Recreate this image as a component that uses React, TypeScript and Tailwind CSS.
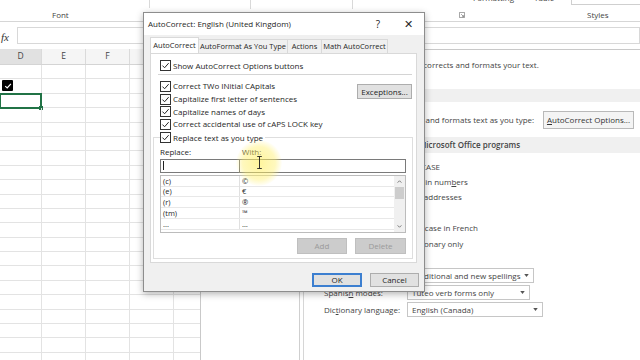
import React from 'react';

function Tick({ dark = false }: { dark?: boolean }) {
  return (
    <span className="flex h-[11px] w-[11px] shrink-0 items-center justify-center border border-[#333] bg-white">
      <svg viewBox="0 0 10 10" className="h-[9px] w-[9px]">
        <path d="M1.6 5.1 L4 7.5 L8.5 2.4" fill="none" stroke={dark ? '#000' : '#222'} strokeWidth="1.1" />
      </svg>
    </span>
  );
}

function CheckRow({ label }: { label: string }) {
  return (
    <div className="flex h-[12.7px] items-center gap-[2px]">
      <Tick />
      <span>{label}</span>
    </div>
  );
}

function Arrow() {
  return (
    <svg viewBox="0 0 6 4" className="h-[3px] w-[5px]">
      <path d="M0 0 H6 L3 4 Z" fill="#555" />
    </svg>
  );
}

const cols = [
  { name: 'D', w: 'w-[42px]' },
  { name: 'E', w: 'w-[44px]' },
  { name: 'F', w: 'w-[44px]' },
  { name: 'G', w: 'w-[44px]' },
  { name: 'H', w: 'w-[44px]' },
];

const entries = [
  ['(c)', '©'],
  ['(e)', '€'],
  ['(r)', '®'],
  ['(tm)', '™'],
  ['...', '…'],
];

const spelling = [
  'Ignore words in UPPERCASE',
  'Ignore words that contain numbers',
  'Ignore Internet and file addresses',
  'Flag repeated words',
  'Enforce accented uppercase in French',
  'Suggest from main dictionary only',
];

export default function App() {
  const rows = Array.from({ length: 21 }, (_, i) => i);

  return (
    <div className="relative flex h-[360px] w-[640px] flex-col overflow-hidden bg-white font-['Open_Sans','Liberation_Sans',sans-serif] text-[#262626]">
      {/* ribbon strip */}
      <div className="flex h-[22px] shrink-0 border-b border-[#d6d6d6] text-[8px] text-[#444]">
        <div className="flex w-[150px] flex-col">
          <div className="h-[9px] border-r border-[#d9d9d9]" />
          <div className="pl-[52px] pt-[1px]">Font</div>
        </div>
        <div className="flex w-[101px] flex-col">
          <div className="h-[9px] border-r border-[#d9d9d9]" />
        </div>
        <div className="flex w-[102px] flex-col">
          <div className="h-[9px] border-r border-[#d9d9d9]" />
        </div>
        <div className="flex flex-1 flex-col">
          <div className="flex h-[9px] items-start overflow-hidden">
            <span className="ml-[120px] -mt-[7px] leading-[10px]">Formatting</span>
            <span className="ml-[20px] -mt-[7px] leading-[10px]">Table</span>
            <div className="ml-[17px] h-[5px] flex-1 border-b border-l border-[#cfcfcf]" />
          </div>
          <div className="flex items-center pt-[3px]">
            <svg viewBox="0 0 7 7" className="ml-[106px] h-[6px] w-[6px]">
              <path d="M0.5 0.5 H6.5 V6.5 H0.5 Z" fill="none" stroke="#777" strokeWidth="0.8" />
              <path d="M2.5 2.5 L5.5 5.5 M3.5 5.5 H5.5 V3.5" fill="none" stroke="#777" strokeWidth="0.8" />
            </svg>
            <span className="ml-[122px]">Styles</span>
          </div>
        </div>
      </div>

      {/* formula bar */}
      <div className="flex h-[27px] shrink-0 items-start pt-[5px]">
        <span className="w-[17px] pl-[1px] pt-[2px] font-['Liberation_Serif',serif] text-[11px] italic text-[#333]">fx</span>
        <div className="h-[17px] flex-1 border border-[#d8d8d8]" />
      </div>

      {/* sheet + options window */}
      <div className="flex flex-1">
        <div className="w-[200px] shrink-0 overflow-hidden">
          <div className="flex h-[16px] w-[218px] border-b border-[#d4d4d4] text-[8.5px] text-[#444]">
            {cols.map((c, i) => (
              <div
                key={c.name}
                className={`${c.w} flex items-center justify-center border-r border-[#dadada] ${i === 0 ? 'bg-[#e1e1e1]' : 'bg-[#f5f5f5]'}`}
              >
                {c.name}
              </div>
            ))}
          </div>
          {rows.map((r) => (
            <div key={r} className="flex h-[14.4px] w-[218px] border-b border-[#e3e3e3]">
              {cols.map((c, i) => (
                <div key={c.name} className={`${c.w} relative border-r border-[#e3e3e3]`}>
                  {i === 0 && r === 1 && (
                    <span className="ml-[2px] mt-[1px] flex h-[11px] w-[11px] items-center justify-center rounded-[1px] bg-black">
                      <svg viewBox="0 0 10 10" className="h-[8px] w-[8px]">
                        <path d="M1.5 5.2 L4 7.4 L8.6 2.4" fill="none" stroke="#fff" strokeWidth="1.5" />
                      </svg>
                    </span>
                  )}
                  {i === 0 && r === 2 && (
                    <div className="absolute -left-[1px] -top-[1px] h-[16px] w-[43px] border-2 border-[#217346]">
                      <span className="absolute -bottom-[3px] -right-[3px] h-[4px] w-[4px] bg-[#217346]" />
                    </div>
                  )}
                </div>
              ))}
            </div>
          ))}
        </div>

        {/* options window behind */}
        <div className="flex flex-1 border-l border-t border-[#c9c9c9] text-[8px] text-[#444]">
          <div className="ml-[2px] w-[97px] border-r border-[#cfcfcf]" />
          <div className="ml-[3px] flex flex-1 flex-col border-l border-[#d6d6d6]">
            <div className="mt-[9px] flex h-[12px] items-center pl-[50px]">
              Change how Excel corrects and formats your text.
            </div>
            <div className="mt-[18px] flex h-[13px] items-center bg-[#f0f0f0] pl-[6px] font-semibold">
              AutoCorrect options
            </div>
            <div className="mt-[9px] flex h-[18px] items-center pl-[20px]">
              <span>Change how Excel corrects and formats text as you type:</span>
              <span className="ml-auto mr-[6px] flex h-[18px] w-[91px] items-center justify-center border border-[#b9b9b9] bg-[#f4f4f4] text-[#333]">
                <span className="underline">A</span>utoCorrect Options...
              </span>
            </div>
            <div className="mt-[8px] flex h-[16px] items-center bg-[#f0f0f0] pl-[8px] font-semibold">
              When correcting spelling in Microsoft Office programs
            </div>
            <div className="mt-[6px] flex flex-col">
              {spelling.map((s) => (
                <div key={s} className="flex h-[15.4px] items-center gap-[4px] pl-[18px]">
                  <span className="h-[10px] w-[10px] border border-[#666]" />
                  <span>
                    {s === 'Ignore words that contain numbers' ? (
                      <>
                        Ignore words that contain num<span className="underline">b</span>ers
                      </>
                    ) : (
                      s
                    )}
                  </span>
                </div>
              ))}
            </div>
            <div className="mt-[17px] flex h-[15px] items-center pl-[20px]">
              <span className="w-[83px]">French modes:</span>
              <div className="flex h-[15px] w-[127px] items-center justify-between border border-[#c6c6c6] px-[4px]">
                <span>Traditional and new spellings</span>
                <Arrow />
              </div>
            </div>
            <div className="mt-[2px] flex h-[15px] items-center pl-[20px]">
              <span className="w-[83px]">
                Spanis<span className="underline">h</span> modes:
              </span>
              <div className="flex h-[15px] w-[123px] items-center justify-between border border-[#c6c6c6] px-[4px]">
                <span>Tuteo verb forms only</span>
                <Arrow />
              </div>
            </div>
            <div className="mt-[2px] flex h-[15px] items-center pl-[20px]">
              <span className="w-[83px]">
                Dic<span className="underline">t</span>ionary language:
              </span>
              <div className="flex h-[15px] w-[136px] items-center justify-between border border-[#c6c6c6] px-[4px]">
                <span>English (Canada)</span>
                <Arrow />
              </div>
            </div>
          </div>
        </div>
      </div>

      {/* AutoCorrect dialog */}
      <div className="absolute left-[143px] top-[12px] flex h-[280px] w-[282px] flex-col border border-[#8d8d8d] bg-[#f0f0f0] text-[8px] text-[#262626] shadow-[0_2px_7px_rgba(0,0,0,0.3)]">
        <div className="flex h-[22px] items-center bg-white text-[8px]">
          <span className="flex-1 pl-[4px]">AutoCorrect: English (United Kingdom)</span>
          <span className="w-[30px] text-center text-[10px]">?</span>
          <span className="w-[30px] text-center text-[11px] font-light">✕</span>
          <span className="w-[1px]" />
        </div>

        <div className="ml-[6px] mt-[2px] flex h-[16px] items-end whitespace-nowrap text-[7.5px]">
          <div className="flex h-[16px] w-[49px] items-center justify-center border border-b-0 border-[#d9d9d9] bg-white">
            AutoCorrect
          </div>
          <div className="flex h-[14px] w-[89px] items-center justify-center border-t border-r border-[#d9d9d9]">AutoFormat As You Type</div>
          <div className="flex h-[14px] w-[34px] items-center justify-center border-t border-r border-[#d9d9d9]">Actions</div>
          <div className="flex h-[14px] w-[66px] items-center justify-center border-t border-r border-[#d9d9d9]">Math AutoCorrect</div>
        </div>

        <div className="ml-[6px] flex h-[210px] w-[267px] flex-col border border-[#d9d9d9] bg-white">
          <div className="mt-[6px] flex h-[11px] items-center gap-[2px] pl-[9px]">
            <Tick />
            <span>Show AutoCorrect Options buttons</span>
          </div>
          <div className="ml-[7px] mr-[4px] mt-[3px] h-px bg-[#d4d4d4]" />
          <div className="mt-[5px] flex pl-[9px]">
            <div className="flex flex-1 flex-col">
              <CheckRow label="Correct TWo INitial CApitals" />
              <CheckRow label="Capitalize first letter of sentences" />
              <CheckRow label="Capitalize names of days" />
              <CheckRow label="Correct accidental use of cAPS LOCK key" />
            </div>
            <div className="mr-[4px] mt-[4px] flex h-[15px] w-[55px] items-center justify-center border border-[#adadad] bg-[#e1e1e1]">
              Exceptions...
            </div>
          </div>

          <fieldset className="ml-[2px] mr-[3px] mt-[1px] border border-[#dedede] px-[6px] pb-[4px]">
            <legend className="flex h-[12px] items-center gap-[2px] bg-white pr-[2px]">
              <Tick />
              <span>Replace text as you type</span>
            </legend>
            <div className="mt-[3px] flex h-[10px] items-center">
              <span className="w-[82px]">Replace:</span>
              <span>With:</span>
            </div>
            <div className="mt-[2px] flex h-[14px]">
              <div className="flex w-[80px] items-center border border-[#7a7a7a] pl-[2px]">
                <span className="h-[9px] w-px bg-[#222]" />
              </div>
              <div className="flex-1 border border-l-0 border-[#7a7a7a]" />
            </div>
            <div className="mt-[2px] flex h-[58px] border border-[#bcbcbc]">
              <div className="flex flex-1 flex-col">
                {entries.map(([a, b]) => (
                  <div key={a} className="flex h-[10.8px] items-center border-b border-[#e8e8e8] text-[7.5px]">
                    <span className="w-[79px] border-r border-[#e0e0e0] pl-[2px] leading-[10px]">{a}</span>
                    <span className="pl-[2px] leading-[10px]">{b}</span>
                  </div>
                ))}
              </div>
              <div className="flex w-[11px] flex-col bg-[#f0f0f0]">
                <div className="flex h-[11px] items-center justify-center">
                  <svg viewBox="0 0 6 4" className="h-[3px] w-[5px]">
                    <path d="M0.5 3.5 L3 1 L5.5 3.5" fill="none" stroke="#555" strokeWidth="1" />
                  </svg>
                </div>
                <div className="mx-[1px] h-[12px] bg-[#cdcdcd]" />
                <div className="flex-1" />
                <div className="flex h-[11px] items-center justify-center">
                  <svg viewBox="0 0 6 4" className="h-[3px] w-[5px]">
                    <path d="M0.5 0.5 L3 3 L5.5 0.5" fill="none" stroke="#555" strokeWidth="1" />
                  </svg>
                </div>
              </div>
            </div>
            <div className="mt-[5px] flex h-[16px] justify-end gap-[8px]">
              <div className="flex w-[50px] items-center justify-center border border-[#bfbfbf] bg-[#cccccc] text-[#9a9a9a]">Add</div>
              <div className="flex w-[51px] items-center justify-center border border-[#bfbfbf] bg-[#cccccc] text-[#9a9a9a]">Delete</div>
            </div>
          </fieldset>
        </div>

        <div className="mt-[10px] flex h-[14px] justify-end gap-[8px] pr-[5px]">
          <div className="flex w-[50px] items-center justify-center border-2 border-[#3c7fd0] bg-[#e1e1e1]">OK</div>
          <div className="flex w-[49px] items-center justify-center border border-[#adadad] bg-[#e1e1e1]">Cancel</div>
        </div>
      </div>

      {/* cursor highlight */}
      <div className="absolute left-[236px] top-[140px] h-[46px] w-[46px] rounded-full bg-[radial-gradient(circle,rgba(255,238,90,0.6)_0%,rgba(255,240,110,0.45)_50%,rgba(255,245,150,0)_72%)]" />
      <svg viewBox="0 0 7 14" className="absolute left-[256px] top-[156px] h-[13px] w-[7px]">
        <path d="M1 0.5 H6 M3.5 0.5 V13.5 M1 13.5 H6" fill="none" stroke="#222" strokeWidth="1" />
      </svg>
    </div>
  );
}
